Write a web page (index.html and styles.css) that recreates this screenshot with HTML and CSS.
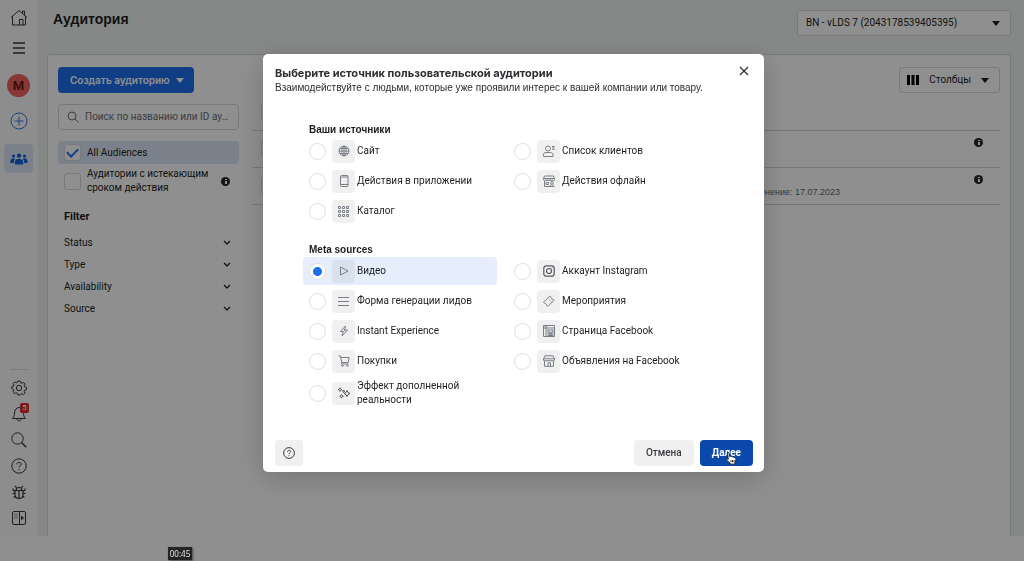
FILE: index.html
```html
<!DOCTYPE html>
<html lang="ru">
<head>
  <meta charset="UTF-8">
  <meta name="viewport" content="width=device-width, initial-scale=1">
  <title>Аудитория</title>
  <link rel="stylesheet" href="styles.css">
</head>
<body>
  <div class="app">
    <nav class="sidebar">
      <a class="side-link" href="#" aria-label="Home">
        <svg width="18" height="18" viewBox="0 0 18 18"><path d="M1 8.500 9 1.500l8 7M2.500 7.500v8.500h13V7.500M12.500 4.500V2h2v4M9.500 16v-5.500h3.500V16"/></svg>
      </a>
      <button class="side-link side-menu" aria-label="Menu">
        <svg width="14" height="14" viewBox="0 0 14 14"><path class="thick" d="M1 2h12M1 7h12M1 12h12"/></svg>
      </button>
      <a class="avatar" href="#">M</a>
      <button class="side-link side-plus" aria-label="Create">
        <svg width="18" height="18" viewBox="0 0 18 18"><circle cx="9" cy="9" r="8"/><path d="M9 4.500v9M4.500 9h9"/></svg>
      </button>
      <a class="side-link side-active" href="#" aria-label="Audiences">
        <svg width="18" height="12" viewBox="0 0 18 12"><g class="fill"><circle cx="9" cy="2.600" r="2.200"/><circle cx="3.500" cy="3" r="1.600"/><circle cx="14.500" cy="3" r="1.600"/><path d="M4.800 11.500V9.500C4.800 7 6.500 5.700 9 5.700s4.200 1.300 4.200 3.800v2zM.5 10V8c0-2 1.400-2.800 3-2.800.8 0 1.400.2 1.900.5C4.300 6.800 3.900 8 3.900 10zM17.500 10V8c0-2-1.400-2.800-3-2.800-.8 0-1.400.2-1.900.5 1.100 1.100 1.500 2.300 1.500 4.300z"/></g></svg>
      </a>
      <div class="side-bottom">
        <button class="side-link" aria-label="Settings">
          <svg width="16" height="16" viewBox="0 0 16 16"><circle cx="8" cy="8" r="2.700"/><path d="M6.800 1h2.400l.5 1.800 1.200.5 1.600-.9 1.600 1.600-.9 1.600.5 1.200 1.800.5v2.400l-1.800.5-.5 1.200.9 1.600-1.600 1.600-1.600-.9-1.200.5L9.200 15H6.800l-.5-1.800-1.200-.5-1.600.9L1.900 12l.9-1.600-.5-1.200L.8 8.700V6.800l1.700-.5.500-1.200-.9-1.600 1.600-1.600 1.500.9 1.100-.5z"/></svg>
        </button>
        <button class="side-link side-bell" aria-label="Notifications">
          <svg width="16" height="16" viewBox="0 0 16 16"><path d="M1.500 12.500c1.600-1.500 1.800-3 2-5.500C3.800 3.500 5.500 1.500 8 1.500s4.200 2 4.500 5.500c.2 2.500.4 4 2 5.500zM6 12.800c.2 2.700 3.800 2.700 4 0"/></svg>
          <span class="badge">5</span>
        </button>
        <button class="side-link" aria-label="Search">
          <svg width="16" height="16" viewBox="0 0 16 16"><circle cx="6.500" cy="6.500" r="5.700"/><path class="thick" d="m10.800 10.800 4.500 4.500"/></svg>
        </button>
        <button class="side-link" aria-label="Help">
          <svg width="16" height="16" viewBox="0 0 16 16"><circle cx="8" cy="8" r="7.200"/><path d="M5.900 6.400c0-2.800 4.300-2.700 4.300-.2C10.200 7.800 8 7.800 8 9.500M8 11v1.200"/></svg>
        </button>
        <button class="side-link" aria-label="Report a problem">
          <svg width="16" height="16" viewBox="0 0 16 16"><path class="bold" d="M4 6.500h8v4.200C12 13 10.200 14.500 8 14.500S4 13 4 10.700zM5 6.500c0-4 6-4 6 0M8 7v7M5.500 3.500 4 2M10.500 3.500 12 2M4 7.500 2 6V4.500M12 7.500 14 6V4.500M4 9.500H1.500M12 9.500h2.500M4.300 12l-1.600 1.500M11.700 12l1.600 1.500"/></svg>
        </button>
        <button class="side-link" aria-label="Collapse panel">
          <svg width="16" height="16" viewBox="0 0 16 16"><rect x="1.500" y="1.500" width="13" height="13" rx="1.500"/><path d="M8.500 1.500v13"/><path class="dots" d="M3.500 4h3M3.500 6h3M3.500 8h3"/><path class="fill" d="M10 5.500 13 8l-3 2.500z"/></svg>
        </button>
      </div>
    </nav>

    <main class="main">
      <header class="topbar">
        <h1>Аудитория</h1>
        <div class="account">
          <select aria-label="Аккаунт">
            <option>BN - vLDS 7 (2043178539405395)</option>
          </select>
          <span class="caret"></span>
        </div>
      </header>

      <section class="card">
        <div class="filters">
          <button class="create">Создать аудиторию <span class="caret"></span></button>
          <div class="search">
            <svg width="12" height="12" viewBox="0 0 12 12"><circle cx="5" cy="5" r="4"/><path d="m8 8 3.500 3.500"/></svg>
            <input type="text" aria-label="Поиск" placeholder="Поиск по названию или ID аудитории">
          </div>
          <label class="check check-on">
            <input type="checkbox" checked>
            <span>All Audiences</span>
          </label>
          <label class="check">
            <input type="checkbox">
            <span>Аудитории с истекающим сроком действия</span>
            <i class="info"></i>
          </label>
          <h2>Filter</h2>
          <button class="filter">Status <svg width="8" height="6" viewBox="0 0 8 6"><path d="m1 1 3 3 3-3"/></svg></button>
          <button class="filter">Type <svg width="8" height="6" viewBox="0 0 8 6"><path d="m1 1 3 3 3-3"/></svg></button>
          <button class="filter">Availability <svg width="8" height="6" viewBox="0 0 8 6"><path d="m1 1 3 3 3-3"/></svg></button>
          <button class="filter">Source <svg width="8" height="6" viewBox="0 0 8 6"><path d="m1 1 3 3 3-3"/></svg></button>
        </div>

        <div class="list">
          <button class="columns">
            <svg width="12" height="10" viewBox="0 0 12 10"><path class="fill" d="M0 0h3v10H0zM4.500 0h3v10h-3zM9 0h3v10H9z"/></svg>
            Столбцы
            <span class="caret"></span>
          </button>
          <table class="audiences">
            <thead>
              <tr><th><input type="checkbox" aria-label="Выбрать все"></th><th></th><th></th></tr>
            </thead>
            <tbody>
              <tr>
                <td><input type="checkbox" aria-label="Выбрать"></td>
                <td></td>
                <td><i class="info"></i></td>
              </tr>
              <tr>
                <td><input type="checkbox" aria-label="Выбрать"></td>
                <td class="changed">изменение: 17.07.2023</td>
                <td><i class="info"></i></td>
              </tr>
            </tbody>
          </table>
        </div>
      </section>
    </main>
  </div>

  <footer class="player"><span class="time">00:45</span></footer>

  <div class="overlay">
    <form class="modal" role="dialog" aria-labelledby="modal-title">
      <header class="modal-head">
        <div>
          <h2 id="modal-title">Выберите источник пользовательской аудитории</h2>
          <p>Взаимодействуйте с людьми, которые уже проявили интерес к вашей компании или товару.</p>
        </div>
        <button type="button" class="close" aria-label="Закрыть">
          <svg width="10" height="10" viewBox="0 0 10 10"><path d="m1 1 8 8M9 1 1 9"/></svg>
        </button>
      </header>

      <div class="sources">
        <fieldset>
          <legend>Ваши источники</legend>
          <div class="options">
            <div class="column">
              <label class="option">
                <input type="radio" name="source">
                <span class="tile"><svg width="12" height="12" viewBox="0 0 12 12"><circle cx="6" cy="6" r="5"/><path d="M6 1v10M1 6h10M1.800 3.500h8.400M1.800 8.500h8.400M6 1c-3 2.500-3 7.500 0 10M6 1c3 2.500 3 7.500 0 10"/></svg></span>
                Сайт
              </label>
              <label class="option">
                <input type="radio" name="source">
                <span class="tile"><svg width="12" height="12" viewBox="0 0 12 12"><rect x="2.500" y=".5" width="7.500" height="11" rx="1"/><path d="M2.500 2h7.500M2.500 9.500h7.500"/></svg></span>
                Действия в приложении
              </label>
              <label class="option">
                <input type="radio" name="source">
                <span class="tile"><svg width="11" height="11" viewBox="0 0 11 11"><path d="M.5.500h2v2h-2zM4.500.500h2v2h-2zM8.500.500h2v2h-2zM.5 4.500h2v2h-2zM4.500 4.500h2v2h-2zM8.500 4.500h2v2h-2zM.5 8.500h2v2h-2zM4.500 8.500h2v2h-2zM8.500 8.500h2v2h-2z"/></svg></span>
                Каталог
              </label>
            </div>
            <div class="column">
              <label class="option">
                <input type="radio" name="source">
                <span class="tile"><svg width="12" height="12" viewBox="0 0 12 12"><circle cx="5" cy="3.500" r="2.500"/><path d="M.5 11.500V9.800C.5 8.300 1.500 7.500 3 7.500h4.500c1.500 0 2.500.8 2.500 2.300v1.700zM9 1.500h2.500M9 3h2.500M9.500 4.500h2"/></svg></span>
                Список клиентов
              </label>
              <label class="option">
                <input type="radio" name="source">
                <span class="tile"><svg width="12" height="12" viewBox="0 0 12 12"><path d="M1.500 1h9l1 2.500v1c0 1.500-2 1.500-2.200 0 0 1.500-2.200 1.500-2.200 0 0 1.500-2.200 1.500-2.200 0 0 1.500-2.200 1.500-2.200 0C2.600 6 .5 6 .5 4.500v-1zM.5 3.500h11M1.500 6v5.500H7M3 7.500h2.500v2H3z"/><circle cx="9" cy="7.800" r="1.300"/><path d="M7 11.500c0-2.500 4-2.500 4 0z"/></svg></span>
                Действия офлайн
              </label>
            </div>
          </div>
        </fieldset>

        <fieldset>
          <legend>Meta sources</legend>
          <div class="options">
            <div class="column">
              <label class="option option-on">
                <input type="radio" name="source" checked>
                <span class="tile"><svg width="12" height="12" viewBox="0 0 12 12"><path d="M2.500 2v8L10 6z"/></svg></span>
                Видео
              </label>
              <label class="option">
                <input type="radio" name="source">
                <span class="tile"><svg width="11" height="11" viewBox="0 0 11 11"><path d="M0 1.500h11M0 5.500h11M0 9.500h11"/></svg></span>
                Форма генерации лидов
              </label>
              <label class="option">
                <input type="radio" name="source">
                <span class="tile"><svg width="12" height="12" viewBox="0 0 12 12"><path d="M7.500 1 2.500 6.500h2.700L4 11l5.500-6H6.600zM5.500 6.500 7 5"/></svg></span>
                Instant Experience
              </label>
              <label class="option">
                <input type="radio" name="source">
                <span class="tile"><svg width="12" height="12" viewBox="0 0 12 12"><path d="M.5 1h2l1.300 6.500h6.400l1-5H2.800M3.800 7.500 3.300 9h7.200"/><circle cx="4.500" cy="10.500" r=".8"/><circle cx="9.500" cy="10.500" r=".8"/></svg></span>
                Покупки
              </label>
              <label class="option">
                <input type="radio" name="source">
                <span class="tile tile-dark"><svg width="14" height="12" viewBox="0 0 14 12"><path d="m3 .8.600 1.200 1.200.6-1.200.6L3 4.400l-.6-1.200-1.200-.6L2.400 2zM6.500 3l.4.9.9.4-.9.4-.4.900-.4-.9-.9-.4.9-.4zM10 3.500l1 2 2 1-2 1-1 2-1-2-2-1 2-1zM4.500 7.500l.6 1.200 1.200.6-1.200.6-.6 1.200-.6-1.200-1.200-.6 1.200-.6z"/></svg></span>
                <span>Эффект дополненной реальности</span>
              </label>
            </div>
            <div class="column">
              <label class="option">
                <input type="radio" name="source">
                <span class="tile tile-dark"><svg width="12" height="12" viewBox="0 0 12 12"><g class="bold"><rect x=".8" y=".8" width="10.400" height="10.400" rx="2.500"/><circle cx="6" cy="6" r="2.500"/><path d="M8.700 3.200h.6"/></g></svg></span>
                Аккаунт Instagram
              </label>
              <label class="option">
                <input type="radio" name="source">
                <span class="tile"><svg width="12" height="12" viewBox="0 0 12 12"><path d="m.5 7.300 6.200-6.200 1.300 1c-.2 1.200.8 2.200 2 2l1 1.200L4.800 11.500 3.600 10.500c.2-1.200-.9-2.300-2.100-2.100zM5.700 4l.7.700M7.300 5.600l.7.700"/></svg></span>
                Мероприятия
              </label>
              <label class="option">
                <input type="radio" name="source">
                <span class="tile"><svg width="12" height="12" viewBox="0 0 12 12"><path d="M.5.500h11v11H.5zM.5 3h11M3 3v8.500M4.500 5h6M5 5v2.200h5V5M5 7.500v3h5v-3M6.500 8h2v1.500h-2zM1.500 1.800h3"/></svg></span>
                Страница Facebook
              </label>
              <label class="option">
                <input type="radio" name="source">
                <span class="tile"><svg width="12" height="12" viewBox="0 0 12 12"><path d="M2 .8h8l1.500 3V5c0 1.300-2.200 1.300-2.200 0 0 1.300-2.200 1.300-2.200 0 0 1.300-2.200 1.300-2.200 0 0 1.300-2.200 1.300-2.200 0C2.700 6.300.5 6.300.5 5V3.800zM.5 3.800h11M1.500 6v5.300h9V6M5 11.300V7.800h2.500v3.500"/></svg></span>
                Объявления на Facebook
              </label>
            </div>
          </div>
        </fieldset>
      </div>

      <footer class="modal-foot">
        <button type="button" class="btn help" aria-label="Справка">
          <svg width="12" height="12" viewBox="0 0 12 12"><circle cx="6" cy="6" r="5.400"/><path d="M4.500 4.800c0-2 3.100-2 3.100-.1C7.600 5.800 6 5.900 6 7.200M6 8.300v.9"/></svg>
        </button>
        <button type="button" class="btn">Отмена</button>
        <button type="button" class="btn btn-primary">
          Далее
          <svg class="cursor" width="12" height="13" viewBox="0 0 12 13"><path d="M3.200 7.500 2.700 1.600c0-1.200 1.500-1.200 1.600 0l.4 3c.5-.6 1.400-.4 1.600.2.500-.5 1.300-.3 1.500.3.600-.4 1.300-.1 1.500.5.800-.4 1.500 0 1.600.9.100 2-.3 3.300-1.100 4.300v1.400H5.200v-1C3.800 10.300 2.400 8.600 1 7.400c.1-1 1.400-.9 2.200.1z"/><path d="M6 8.200v2M7.500 8.200v2M9 8.200v2"/></svg>
        </button>
      </footer>
    </form>
  </div>
</body>
</html>
```

FILE: styles.css
```css
* {
  box-sizing: border-box;
  margin: 0;
  padding: 0;
}

body {
  min-height: 100vh;
  display: flex;
  flex-direction: column;
  font-family: Roboto, "Liberation Sans", sans-serif;
  font-size: 10px;
  line-height: 14px;
  color: #1c1e21;
  background: #ffffff;
}

button, input, select {
  font: inherit;
  color: inherit;
  border: none;
  background: none;
}

button {
  cursor: pointer;
}

a {
  color: inherit;
  text-decoration: none;
}

svg {
  flex: none;
  fill: none;
  stroke: currentColor;
  stroke-width: 1;
  stroke-linejoin: round;
}

.fill {
  fill: currentColor;
  stroke: none;
}

.bold {
  stroke-width: 1.2;
}

.thick {
  stroke-width: 1.5;
}

.dots {
  stroke-dasharray: 1;
}

.app {
  flex: 1;
  display: flex;
}

/* sidebar */
.sidebar {
  width: 38px;
  padding: 6px 5px 6px 4px;
  display: flex;
  flex-direction: column;
  align-items: center;
  background: #fcfcfc;
  color: #33373c;
}

.side-link {
  width: 29px;
  height: 24px;
  display: flex;
  align-items: center;
  justify-content: center;
}

.side-menu {
  margin: 6px 0 14px;
}

.avatar {
  width: 23px;
  height: 23px;
  border-radius: 50%;
  background: #f0625f;
  color: #6b1418;
  font-size: 13px;
  font-weight: bold;
  line-height: 23px;
  text-align: center;
}

.side-plus {
  margin: 12px 0 11px;
  color: #3578e5;
}

.side-active {
  height: 29px;
  border-radius: 4px;
  background: #dbe7f8;
  color: #1461d8;
}

.side-bottom {
  width: 18px;
  margin-top: auto;
  padding-top: 6px;
  display: flex;
  flex-direction: column;
  align-items: center;
  gap: 2px;
  border-top: 1px solid #d8dadd;
}

.side-bell {
  position: relative;
}

.badge {
  position: absolute;
  top: 1px;
  right: 4px;
  width: 9px;
  height: 10px;
  border-radius: 2px;
  background: #e02c33;
  color: #ffffff;
  font-size: 8px;
  line-height: 10px;
}

/* page */
.main {
  flex: 1;
  padding: 10px 13px 0 9px;
  display: flex;
  flex-direction: column;
  background: #eff0f1;
}

.topbar {
  margin-bottom: 18px;
  padding-left: 6px;
  display: flex;
  justify-content: space-between;
}

.topbar h1 {
  font-family: "Liberation Sans", sans-serif;
  font-size: 14px;
  line-height: 18px;
}

.account {
  width: 214px;
  height: 26px;
  padding: 0 10px 0 8px;
  display: flex;
  align-items: center;
  border: 1px solid #d5d8dc;
  border-radius: 3px;
  background: #ffffff;
}

.account select {
  flex: 1;
  appearance: none;
}

.caret {
  border: 4px solid transparent;
  border-top: 5px solid currentColor;
  border-bottom: none;
}

.card {
  flex: 1;
  padding: 12px 10px 12px 10px;
  display: flex;
  gap: 14px;
  border: 1px solid #d5d8dc;
  border-bottom: none;
  border-radius: 3px 3px 0 0;
  background: #ffffff;
}

.filters {
  width: 181px;
}

.create {
  height: 26px;
  padding: 0 10px 0 12px;
  display: flex;
  align-items: center;
  gap: 6px;
  border-radius: 4px;
  background: #1b6fee;
  color: #ffffff;
  font-family: Inter, sans-serif;
  font-weight: 600;
}

.search {
  height: 26px;
  margin: 11px 0;
  padding: 0 6px 0 8px;
  display: flex;
  align-items: center;
  gap: 6px;
  border: 1px solid #d5d8dc;
  border-radius: 4px;
  color: #6b6f76;
}

.search input {
  flex: 1;
  min-width: 0;
  outline: none;
  text-overflow: ellipsis;
}

.search input::placeholder {
  color: #6b6f76;
}

.check {
  margin-bottom: 3px;
  padding: 0 9px 0 6px;
  display: flex;
  align-items: center;
  gap: 6px;
}

.check-on {
  height: 23px;
  border-radius: 4px;
  background: #dbe7f8;
}

.check span {
  flex: 1;
}

input[type="checkbox"] {
  width: 17px;
  height: 17px;
  display: grid;
  place-items: center;
  appearance: none;
  border: 1px solid #d5d8dc;
  border-radius: 3px;
  background: #ffffff;
}

input[type="checkbox"]:checked::before {
  content: "";
  width: 9px;
  height: 5px;
  border: solid #1b6fee;
  border-width: 0 0 2px 2px;
  transform: translateY(-1px) rotate(-45deg);
}

.info {
  width: 9px;
  height: 9px;
  display: inline-block;
  border-radius: 50%;
  background: linear-gradient(#ffffff, #ffffff) 4px 4px / 2px 3px no-repeat,
    linear-gradient(#ffffff, #ffffff) 4px 2px / 2px 1px no-repeat, #25282c;
}

.filters h2 {
  margin: 15px 6px 8px;
  font-size: 11px;
  line-height: 14px;
}

.filter {
  width: 100%;
  height: 22px;
  padding: 0 8px 0 6px;
  display: flex;
  align-items: center;
  justify-content: space-between;
}

.filter svg {
  stroke-width: 1.2;
}

.list {
  flex: 1;
}

.columns {
  height: 26px;
  margin-left: auto;
  padding: 0 10px 0 7px;
  display: flex;
  align-items: center;
  gap: 10px;
  border: 1px solid #d5d8dc;
  border-radius: 3px;
}

.columns svg {
  color: #000000;
}

.audiences {
  width: 100%;
  border-collapse: collapse;
}

.audiences tr {
  height: 37px;
  border-bottom: 1px solid #cfd2d6;
}

.audiences th:first-child,
.audiences td:first-child {
  width: 34px;
  padding-left: 8px;
}

.audiences td:last-child {
  width: 160px;
  padding: 0 17px 10px 0;
  text-align: right;
}

.audiences .changed {
  padding-top: 13px;
  color: #606770;
  font-family: "Liberation Sans", sans-serif;
  font-size: 9px;
  text-align: right;
}

/* video strip */
.player {
  height: 25px;
  padding: 11px 168px 0;
}

.time {
  position: relative;
  z-index: 2;
  display: block;
  width: 24px;
  height: 13px;
  background: #242424;
  color: #e4e4e4;
  box-shadow: 1px 1px 2px rgba(0, 0, 0, 0.5);
  font-family: "Noto Sans", sans-serif;
  font-size: 8px;
  line-height: 13px;
  text-align: center;
}

/* dialog */
.overlay {
  position: fixed;
  inset: 0;
  padding: 54px 260px 0 263px;
  background: rgba(0, 0, 0, 0.44);
}

.modal {
  padding: 12px 11px 6px 12px;
  border-radius: 5px;
  background: #ffffff;
  box-shadow: 0 6px 28px rgba(0, 0, 0, 0.2);
}

.modal-head {
  display: flex;
  justify-content: space-between;
  align-items: flex-start;
  font-family: "Liberation Sans", sans-serif;
  color: #2b2d31;
}

.modal-head h2 {
  font-family: Inter, sans-serif;
  font-size: 11px;
  font-weight: 700;
  line-height: 14px;
}

.modal-head p {
  font-size: 10px;
  line-height: 16px;
}

.close {
  width: 18px;
  height: 14px;
}

.close svg {
  stroke-width: 1.2;
}

.sources {
  padding: 27px 28px 0;
  display: flex;
  flex-direction: column;
  gap: 18px;
}

fieldset {
  min-width: 0;
  border: none;
}

legend {
  padding: 0 6px;
  font-family: "Liberation Sans", sans-serif;
  font-size: 10px;
  font-weight: bold;
}

.options {
  display: grid;
  grid-template-columns: 194px 1fr;
  gap: 11px;
}

.column {
  display: flex;
  flex-direction: column;
  gap: 2px;
}

.option {
  min-height: 28px;
  padding: 2px 6px;
  display: flex;
  align-items: center;
  gap: 2px;
  border-radius: 4px;
}

.option-on {
  background: #e6eefb;
}

.option input {
  width: 17px;
  height: 17px;
  margin-right: 4px;
  flex: none;
  appearance: none;
  border: 1px solid #dcdee1;
  border-radius: 50%;
  background: #ffffff;
}

.option input:checked {
  background: radial-gradient(#1b6fee 4px, #ffffff 5px);
}

.tile {
  width: 23px;
  height: 23px;
  flex: none;
  display: grid;
  place-items: center;
  border-radius: 4px;
  background: #f0f0f0;
  color: #7a7e87;
}

.tile-dark {
  color: #55595f;
}

.option-on .tile {
  background: #d9e1ee;
}

.modal-foot {
  margin-top: 31px;
  display: flex;
  gap: 6px;
}

.btn {
  height: 26px;
  padding: 0 12px;
  border-radius: 4px;
  background: #f0f0f0;
  color: #3a3d42;
  font-weight: 500;
}

.help {
  padding: 0 8px;
  margin-right: auto;
  display: grid;
  place-items: center;
}

.btn-primary {
  position: relative;
  background: #0a48ac;
  color: #ffffff;
  font-weight: bold;
}

.cursor {
  position: absolute;
  left: 25px;
  top: 12px;
  fill: #ffffff;
  stroke: #222222;
}
```
